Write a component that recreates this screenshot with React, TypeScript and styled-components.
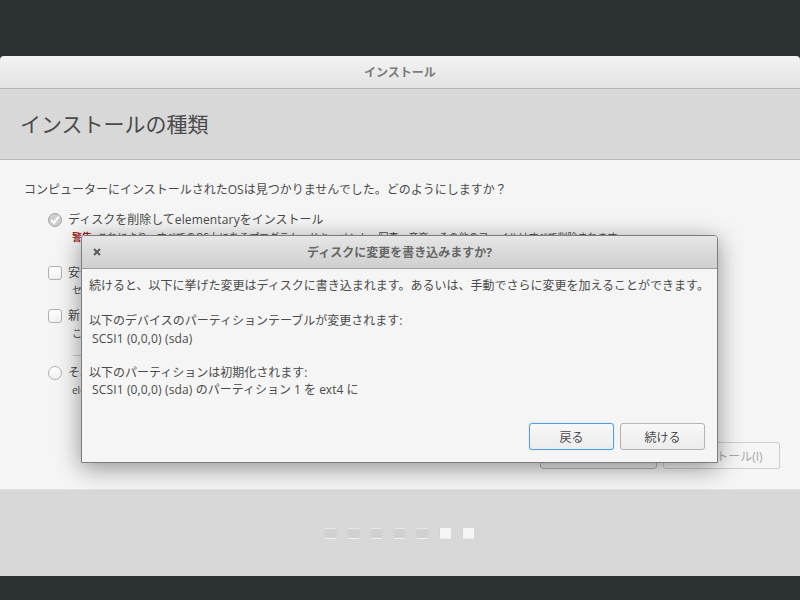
import React from "react";
import styled, { createGlobalStyle } from "styled-components";

const Global = createGlobalStyle`
  html, body { margin: 0; padding: 0; width: 800px; height: 600px; overflow: hidden; background: #2c3133; }
  body { font-family: "Open Sans", "Noto Sans CJK JP", sans-serif; font-size: 12px; color: #4a4a4a; }
  * { box-sizing: border-box; }
`;

const Screen = styled.div`
  position: relative;
  width: 800px;
  height: 600px;
  padding-top: 56px;
  background: #2c3133;
`;
const Win = styled.div`
  display: flex;
  flex-direction: column;
  height: 520px;
  border-radius: 4px 4px 0 0;
  overflow: hidden;
`;
const TitleBar = styled.div`
  height: 33px;
  flex: none;
  display: flex;
  align-items: center;
  justify-content: center;
  background: linear-gradient(#f3f3f3, #e3e3e3);
  border-bottom: 1px solid #b4b4b4;
  font-weight: 700;
  font-size: 12px;
  color: #7b7b7b;
`;
const Header = styled.div`
  height: 71px;
  flex: none;
  display: flex;
  align-items: center;
  padding: 0 0 3px 20px;
  background: #d8d8d8;
  border-bottom: 1px solid #b9b9b9;
  font-size: 21px;
  color: #4a4a4a;
`;
const Content = styled.div`
  height: 329px;
  flex: none;
  display: flex;
  flex-direction: column;
  padding: 21px 20px 0 24px;
  background: #f5f5f5;
`;
const Question = styled.div`
  height: 18px;
  line-height: 18px;
  margin-bottom: 12px;
  white-space: nowrap;
`;
const Option = styled.div<{ $gap: number }>`
  display: flex;
  flex-direction: column;
  margin-bottom: ${(p) => p.$gap}px;
  padding-left: 24px;
`;
const OptionRow = styled.div`
  display: flex;
  align-items: center;
  gap: 6px;
  height: 18px;
  line-height: 18px;
  white-space: nowrap;
`;
const Sub = styled.div`
  height: 17px;
  line-height: 17px;
  margin-left: 24px;
  font-size: 10px;
  white-space: nowrap;
`;
const Warn = styled.b`
  color: #a02020;
  font-weight: 700;
`;
const CheckBox = styled.span<{ $round?: boolean }>`
  width: 14px;
  height: 14px;
  flex: none;
  background: linear-gradient(#fff, #f1f1f1);
  border: 1px solid #b0b0b0;
  border-radius: ${(p) => (p.$round ? "50%" : "3px")};
`;
const Rule = styled.div`
  width: 9px;
  height: 1px;
  margin: 0 0 8px 49px;
  background: #c4c4c4;
`;
const Actions = styled.div`
  display: flex;
  justify-content: flex-end;
  gap: 6px;
  margin-top: auto;
  padding-bottom: 20px;
`;
const Button = styled.div<{ $w: number; $disabled?: boolean; $focus?: boolean }>`
  width: ${(p) => p.$w}px;
  height: 27px;
  display: flex;
  align-items: center;
  justify-content: center;
  border-radius: 3px;
  border: 1px solid ${(p) => (p.$focus ? "#4f9fe3" : p.$disabled ? "#cdcdcd" : "#b4b4b4")};
  box-shadow: ${(p) => (p.$focus ? "0 0 1px 0 rgba(79, 159, 227, 0.6)" : "none")};
  background: ${(p) => (p.$disabled ? "#f5f5f5" : "linear-gradient(#f8f8f8, #ececec)")};
  color: ${(p) => (p.$disabled ? "#a8a8a8" : "#4a4a4a")};
  font-size: 12px;
`;
const Footer = styled.div`
  flex: 1;
  display: flex;
  justify-content: center;
  gap: 12px;
  padding: 38px 1px 0 0;
  background: #d8d8d8;
  border-top: 1px solid #e2e2e2;
`;
const Dot = styled.span<{ $on?: boolean }>`
  position: relative;
  width: 11px;
  height: 11px;
  background: ${(p) => (p.$on ? "#f5f5f5" : "transparent")};
  border-top: 1px solid ${(p) => (p.$on ? "#f5f5f5" : "#e6e6e6")};
  border-bottom: 1px solid ${(p) => (p.$on ? "#ececec" : "#f0f0f0")};

  &::before {
    content: "";
    position: absolute;
    inset: 0 ${(p) => (p.$on ? "11px" : "-1px")} 0 -1px;
    background: #d1d1d1;
    border-radius: 4px;
  }
`;
const Dialog = styled.div`
  position: absolute;
  left: 81px;
  top: 235px;
  width: 637px;
  height: 228px;
  display: flex;
  flex-direction: column;
  background: #f5f5f5;
  border: 1px solid #7c7c7c;
  border-radius: 4px 4px 0 0;
  box-shadow: 0 5px 24px rgba(0, 0, 0, 0.42);
`;
const DialogBar = styled.div`
  position: relative;
  height: 33px;
  flex: none;
  display: flex;
  align-items: center;
  justify-content: center;
  background: linear-gradient(#e6e6e6, #cfcfcf);
  border-bottom: 1px solid #9e9e9e;
  border-radius: 3px 3px 0 0;
  font-weight: 700;
  color: #666;
`;
const CloseIcon = styled.svg`
  position: absolute;
  left: 11px;
  top: 12px;
`;
const DialogBody = styled.div`
  flex: 1;
  display: flex;
  flex-direction: column;
  padding: 8px 12px 0 7px;
  font-size: 12px;
`;
const Line = styled.div<{ $indent?: boolean; $top?: number }>`
  height: 18px;
  line-height: 18px;
  white-space: nowrap;
  margin-top: ${(p) => p.$top ?? 0}px;
  padding-left: ${(p) => (p.$indent ? 3 : 0)}px;
`;
const Latin = styled.span`
  letter-spacing: 0.14px;
`;
const DialogActions = styled.div`
  display: flex;
  justify-content: flex-end;
  gap: 6px;
  margin-top: auto;
  padding-bottom: 12px;
`;

export default function App() {
  return (
    <Screen>
      <Global />
      <Win>
        <TitleBar>インストール</TitleBar>
        <Header>インストールの種類</Header>
        <Content>
          <Question>コンピューターにインストールされたOSは見つかりませんでした。どのようにしますか？</Question>
          <Option $gap={18}>
            <OptionRow>
              <svg width="14" height="14" viewBox="0 0 14 14">
                <circle cx="7" cy="7" r="6.5" fill="#cdcdcd" stroke="#a4a4a4" />
                <path d="M3.4 7 6 10 10.8 3.6" fill="none" stroke="#fbfbfb" strokeWidth="2.2" />
              </svg>
              <span>
                ディスクを削除して<Latin>elementary</Latin>をインストール
              </span>
            </OptionRow>
            <Sub>
              <Warn>警告:</Warn> これにより、すべてのOS上にあるプログラム、ドキュメント、写真、音楽、その他のファイルはすべて削除されます。
            </Sub>
          </Option>
          <Option $gap={8}>
            <OptionRow>
              <CheckBox />
              安全のために新しいインストールを暗号化する
            </OptionRow>
            <Sub>セキュリティキーは次のステップで選びます。</Sub>
          </Option>
          <Option $gap={13}>
            <OptionRow>
              <CheckBox />
              新しいインストールにLVMを使用する
            </OptionRow>
            <Sub>これにより論理ボリューム管理が設定されます。</Sub>
          </Option>
          <Rule />
          <Option $gap={0}>
            <OptionRow>
              <CheckBox $round />
              それ以外
            </OptionRow>
            <Sub>elementary用にパーティションを自分で作成またはサイズ変更できます。</Sub>
          </Option>
          <Actions>
            <Button $w={117}>戻る(B)</Button>
            <Button $w={117} $disabled>
              インストール(I)
            </Button>
          </Actions>
        </Content>
        <Footer>
          <Dot />
          <Dot />
          <Dot />
          <Dot />
          <Dot />
          <Dot $on />
          <Dot $on />
        </Footer>
      </Win>
      <Dialog>
        <DialogBar>
          <CloseIcon width="8" height="8" viewBox="0 0 8 8">
            <path d="M1 1 7 7M7 1 1 7" stroke="#5c5c5c" strokeWidth="2" />
          </CloseIcon>
          ディスクに変更を書き込みますか?
        </DialogBar>
        <DialogBody>
          <Line>続けると、以下に挙げた変更はディスクに書き込まれます。あるいは、手動でさらに変更を加えることができます。</Line>
          <Line $top={17}>以下のデバイスのパーティションテーブルが変更されます:</Line>
          <Line $indent>
            <Latin>SCSI1 (0,0,0) (sda)</Latin>
          </Line>
          <Line $top={16}>以下のパーティションは初期化されます:</Line>
          <Line $indent $top={-1}>
            <Latin>SCSI1 (0,0,0) (sda)</Latin> のパーティション 1 を ext4 に
          </Line>
          <DialogActions>
            <Button $w={85} $focus>戻る</Button>
            <Button $w={85}>続ける</Button>
          </DialogActions>
        </DialogBody>
      </Dialog>
    </Screen>
  );
}
